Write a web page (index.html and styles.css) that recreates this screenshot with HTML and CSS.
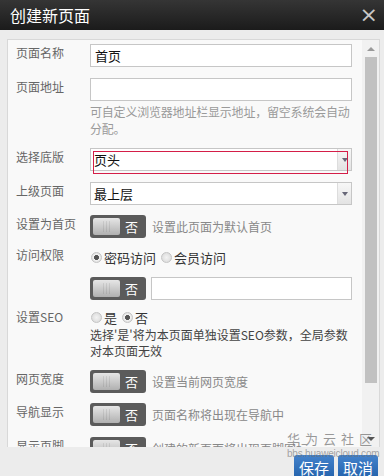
FILE: index.html
```html
<!DOCTYPE html>
<html lang="zh-CN">
<head>
    <meta charset="UTF-8">
    <meta name="viewport" content="width=device-width, initial-scale=1.0">
    <title>创建新页面</title>
    <link rel="stylesheet" href="styles.css">
</head>
<body>

<div class="dialog">
    <div class="dialog-head">
        <span class="dialog-title">创建新页面</span>
        <span class="dialog-close">&times;</span>
    </div>

    <div class="dialog-body">
        <div class="scroll-box">
            <div class="form">
                <div class="row">
                    <label class="row-label">页面名称</label>
                    <div class="row-field"><div class="input">首页</div></div>
                </div>

                <div class="row">
                    <label class="row-label">页面地址</label>
                    <div class="row-field">
                        <div class="input"></div>
                        <p class="hint">可自定义浏览器地址栏显示地址，留空系统会自动分配。</p>
                    </div>
                </div>

                <div class="row">
                    <label class="row-label">选择底版</label>
                    <div class="row-field">
                        <div class="select">
                            <span class="select-text">页头</span>
                            <span class="select-arrow"></span>
                            <span class="focus-ring"></span>
                        </div>
                    </div>
                </div>

                <div class="row row-10">
                    <label class="row-label">上级页面</label>
                    <div class="row-field">
                        <div class="select">
                            <span class="select-text">最上层</span>
                            <span class="select-arrow"></span>
                        </div>
                    </div>
                </div>

                <div class="row row-8">
                    <label class="row-label">设置为首页</label>
                    <div class="row-field inline">
                        <span class="toggle"><span class="knob"></span><span class="toggle-text">否</span></span>
                        <span class="note">设置此页面为默认首页</span>
                    </div>
                </div>

                <div class="row row-8">
                    <label class="row-label">访问权限</label>
                    <div class="row-field inline">
                        <span class="radio checked"></span><span class="radio-text">密码访问</span>
                        <span class="radio"></span><span class="radio-text">会员访问</span>
                    </div>
                </div>

                <div class="row row-8">
                    <label class="row-label"></label>
                    <div class="row-field inline">
                        <span class="toggle"><span class="knob"></span><span class="toggle-text">否</span></span>
                        <div class="input input-grow"></div>
                    </div>
                </div>

                <div class="row">
                    <label class="row-label">设置SEO</label>
                    <div class="row-field">
                        <div class="inline radio-line">
                            <span class="radio"></span><span class="radio-text">是</span>
                            <span class="radio checked"></span><span class="radio-text">否</span>
                        </div>
                        <p class="hint hint-dark">选择'是'将为本页面单独设置SEO参数，全局参数<br>对本页面无效</p>
                    </div>
                </div>

                <div class="row row-10">
                    <label class="row-label">网页宽度</label>
                    <div class="row-field inline">
                        <span class="toggle"><span class="knob"></span><span class="toggle-text">否</span></span>
                        <span class="note">设置当前网页宽度</span>
                    </div>
                </div>

                <div class="row">
                    <label class="row-label">导航显示</label>
                    <div class="row-field inline">
                        <span class="toggle"><span class="knob"></span><span class="toggle-text">否</span></span>
                        <span class="note">页面名称将出现在导航中</span>
                    </div>
                </div>

                <div class="row">
                    <label class="row-label">显示页脚</label>
                    <div class="row-field inline">
                        <span class="toggle"><span class="knob"></span><span class="toggle-text">否</span></span>
                        <span class="note">创建的新页面将出现页脚图标</span>
                    </div>
                </div>
            </div>

            <div class="scrollbar">
                <span class="scroll-up"></span>
                <div class="scroll-track"><span class="scroll-thumb"></span></div>
                <span class="scroll-down"></span>
            </div>
        </div>
    </div>

    <div class="dialog-foot">
        <button class="btn">保存</button>
        <button class="btn">取消</button>
    </div>

    <div class="watermark">
        <span class="wm-big">华为云社区</span>
        <span class="wm-small">bbs.huaweicloud.com</span>
    </div>
</div>

</body>
</html>
```

FILE: styles.css
```css
/* base */
body {
    margin: 0;
    font-family: "Noto Sans CJK SC", "Liberation Sans", sans-serif;
    background-color: #ececec;
}
.dialog {
    position: relative;
    width: 384px;
    height: 476px;
    display: flex;
    flex-direction: column;
    background-color: #ececec;
    overflow: hidden;
}

/* header */
.dialog-head {
    height: 30px;
    flex: none;
    display: flex;
    align-items: center;
    justify-content: space-between;
    padding: 0 6px 0 10px;
    background: linear-gradient(#353535, #1b1b1b);
}
.dialog-title {
    color: #fff;
    font-size: 16px;
    line-height: 30px;
}
.dialog-close {
    color: #c8c8c8;
    font-family: "DejaVu Sans", sans-serif;
    font-size: 22px;
    line-height: 30px;
}

/* body */
.dialog-body {
    flex: none;
    padding: 9px 4px 0 7px;
}
.scroll-box {
    height: 408px;
    display: flex;
    background-color: #f9f9f9;
    border: 1px solid #d8d8d8;
    border-bottom: none;
    box-sizing: border-box;
    overflow: hidden;
}
.form {
    flex: 1;
    padding: 4px 10px 0 8px;
    font-size: 12px;
    color: #666;
}
.row {
    display: flex;
    margin-bottom: 11px;
}
.row-10 { margin-bottom: 10px; }
.row-8 { margin-bottom: 8px; }
.row-label {
    width: 74px;
    flex: none;
    line-height: 18px;
    color: #666;
}
.row-field {
    flex: 1;
    min-height: 23px;
}
.inline {
    display: flex;
    align-items: center;
}

/* inputs */
.input {
    height: 23px;
    box-sizing: border-box;
    border: 1px solid #c6c6c6;
    background-color: #fff;
    padding: 0 4px;
    font-size: 13px;
    line-height: 21px;
    color: #111;
}
.input-grow {
    flex: 1;
    margin-left: 5px;
}
.hint {
    margin: 2px -4px 0 0;
    font-size: 12px;
    line-height: 17px;
    letter-spacing: -0.2px;
    color: #9a9a9a;
}
.hint-dark {
    margin-top: 0;
    line-height: 16px;
    letter-spacing: 0;
    color: #444;
    white-space: nowrap;
}
.select {
    position: relative;
    height: 23px;
    display: flex;
    box-sizing: border-box;
    border: 1px solid #c6c6c6;
    background-color: #fff;
}
.select-text {
    flex: 1;
    padding: 0 3px;
    font-size: 13px;
    line-height: 21px;
    color: #111;
}
.select-arrow {
    width: 13px;
    border-left: 1px solid #ddd;
    background: linear-gradient(#f7f7f7, #e3e3e3);
    display: flex;
    align-items: center;
    justify-content: center;
}
.select-arrow::after {
    content: "";
    border-left: 3px solid transparent;
    border-right: 3px solid transparent;
    border-top: 4px solid #667;
}
.focus-ring {
    position: absolute;
    left: 2px;
    top: 2px;
    width: 255px;
    height: 23px;
    box-sizing: border-box;
    border: 1px solid #d41e48;
}

/* toggle switch */
.toggle {
    width: 56px;
    height: 23px;
    flex: none;
    box-sizing: border-box;
    padding: 3px;
    display: flex;
    align-items: center;
    border-radius: 3px;
    background-color: #5b5b5b;
}
.knob {
    width: 27px;
    height: 17px;
    border-radius: 2px;
    background:
        repeating-linear-gradient(90deg, transparent 0 2px, rgba(0, 0, 0, 0.08) 2px 3px) 8px 3px / 11px 11px no-repeat,
        linear-gradient(#e6e6e6, #b0b0b0);
}
.toggle-text {
    flex: 1;
    text-align: center;
    color: #fff;
    font-size: 13px;
    line-height: 17px;
}
.note {
    margin-left: 6px;
    color: #888;
    font-size: 12px;
    line-height: 18px;
}

/* radios */
.radio {
    width: 11px;
    height: 11px;
    flex: none;
    box-sizing: border-box;
    border: 1px solid #c4c4c4;
    border-radius: 50%;
    background: radial-gradient(#f3f3f3, #d6d6d6);
    margin: 0 2px 0 1px;
}
.radio.checked {
    background: radial-gradient(#555 0 2.2px, #f3f3f3 2.8px, #d0d0d0);
}
.radio-text {
    margin-right: 4px;
    color: #333;
    font-size: 13px;
    line-height: 18px;
}
.radio-line {
    height: 19px;
}

/* fake scrollbar */
.scrollbar {
    width: 17px;
    flex: none;
    display: flex;
    flex-direction: column;
    align-items: center;
    background-color: #f1f1f1;
}
.scroll-up,
.scroll-down {
    height: 17px;
    flex: none;
    display: flex;
    align-items: center;
}
.scroll-up::after {
    content: "";
    border-left: 4px solid transparent;
    border-right: 4px solid transparent;
    border-bottom: 4px solid #999;
}
.scroll-down::after {
    content: "";
    border-left: 4px solid transparent;
    border-right: 4px solid transparent;
    border-top: 4px solid #555;
}
.scroll-track {
    flex: 1;
    width: 100%;
    display: flex;
    justify-content: center;
}
.scroll-thumb {
    width: 12px;
    height: 326px;
    background-color: #c1c1c1;
}

/* footer */
.dialog-foot {
    flex: 1;
    display: flex;
    justify-content: flex-end;
    align-items: flex-start;
    gap: 4px;
    padding: 8px 6px 0 0;
}
.btn {
    width: 40px;
    height: 26px;
    padding: 0;
    border: none;
    border-radius: 3px 3px 0 0;
    background: linear-gradient(#4483cc, #1f5ea8);
    color: #fff;
    font-family: "Noto Sans CJK SC", sans-serif;
    font-size: 15px;
    line-height: 26px;
}

/* watermark over the corner */
.watermark {
    position: absolute;
    left: 287px;
    top: 430px;
    display: flex;
    flex-direction: column;
    align-items: flex-start;
    color: rgba(120, 120, 120, 0.75);
    pointer-events: none;
}
.wm-big {
    font-size: 13px;
    line-height: 18px;
    letter-spacing: 5px;
}
.wm-small {
    font-family: "Liberation Sans", sans-serif;
    font-size: 10px;
    line-height: 12px;
    letter-spacing: -0.2px;
    color: rgba(110, 110, 110, 0.6);
}
```
